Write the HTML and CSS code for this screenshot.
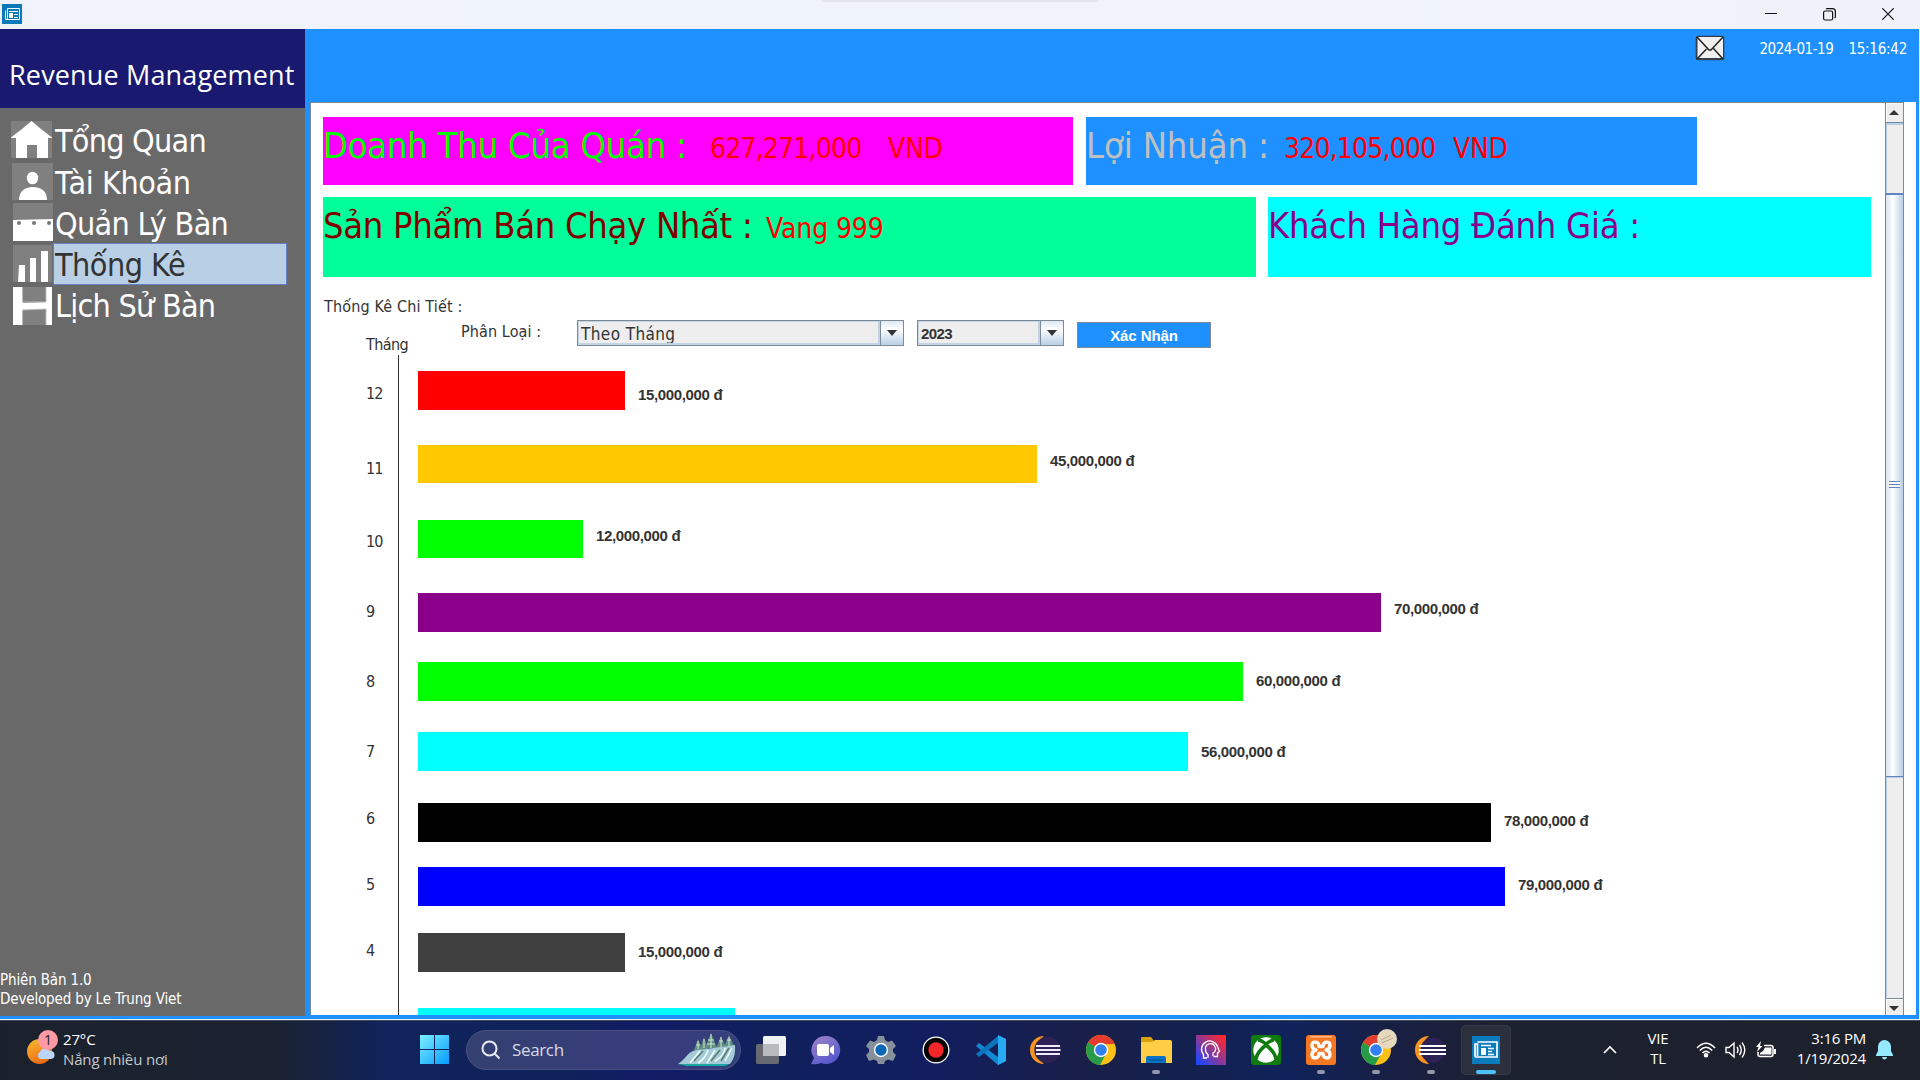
FILE: index.html
```
<!DOCTYPE html>
<html lang="vi">
<head>
<meta charset="utf-8">
<title>Revenue Management</title>
<link rel="stylesheet" href="styles.css">
</head>
<body>
<div class="titlebar">
  <svg class="app-icon" width="20" height="20" viewBox="0 0 20 20"><rect width="20" height="20" fill="#0b78b8"/><g fill="none" stroke="#fff"><path d="M5.5 4.500H17.500V15.500H3.500V6.500"/><path d="M5.500 4.500V15" /><path d="M7 7.500H16M12 10.500H16M12 13.500H16"/></g><path d="M7 9h4v5H7z" fill="#fff"/></svg>
  <div class="window-buttons">
    <svg width="12" height="12" viewBox="0 0 12 12"><path d="M0 5.500H12" stroke="#111"/></svg>
    <svg width="13" height="13" viewBox="0 0 13 13" fill="none" stroke="#111" stroke-width="1.200"><rect x=".6" y="3" width="9" height="9" rx="1.500"/><path d="M3 1Q3.500.6 4.500.6H9.500Q12.400.6 12.400 3.500V8.500Q12.400 9.500 11.600 10"/></svg>
    <svg width="12" height="12" viewBox="0 0 12 12"><path d="M.3.3 11.700 11.700M11.700.3.3 11.700" stroke="#111" stroke-width="1.200"/></svg>
  </div>
</div>

<div class="app">
  <aside class="sidebar">
    <h1 class="brand">Revenue Management</h1>
    <nav class="menu">
      <a class="menu-item home"><svg width="41" height="37" viewBox="0 0 41 37"><rect width="41" height="37" fill="#808080"/><path d="M20.500 0 30 8l11 8.500V17h-4v20H26V24H16v13H5V17H0v-.5L11 8z" fill="#fff"/></svg><span>Tổng Quan</span></a>
      <a class="menu-item account"><svg width="41" height="37" viewBox="0 0 41 37"><rect width="41" height="37" fill="#808080"/><ellipse cx="20.500" cy="15" rx="5.700" ry="6.300" fill="#fff"/><path d="M7 37C7 29 12 24 21 24S35 29 35 37z" fill="#fff"/></svg><span>Tài Khoản</span></a>
      <a class="menu-item table"><svg width="40" height="38" viewBox="0 0 40 38"><rect width="40" height="38" fill="#808080"/><path d="M0 17 40 16V38H0z" fill="#fff"/><g fill="#777"><circle cx="6" cy="20" r="2"/><circle cx="21" cy="20" r="2"/><circle cx="36" cy="20" r="2"/></g></svg><span>Quản Lý Bàn</span></a>
      <a class="menu-item stats selected"><svg width="39" height="37" viewBox="0 0 39 37"><rect width="39" height="37" fill="#808080"/><path d="M6 20h6v17H5zM17 13h6v24h-6zM28 6h7v31h-7z" fill="#fff"/></svg><span>Thống Kê</span></a>
      <a class="menu-item history"><svg width="39" height="38" viewBox="0 0 39 38"><rect width="39" height="38" fill="#fff"/><path d="M10 0H33V15L10 16zM10 23 33 22V38H10z" fill="#808080"/><path d="M9.500 0V15H33V0M9.500 38V23L33 22V38" fill="none" stroke="#bbb"/></svg><span>Lịch Sử Bàn</span></a>
    </nav>
    <footer class="about">Phiên Bản 1.0<br>Developed by Le Trung Viet</footer>
  </aside>

  <main class="main">
    <header class="topbar">
      <svg width="30" height="26" viewBox="0 0 30 26"><rect x=".7" y=".7" width="28.600" height="24.600" rx="2.500" fill="#333f4d"/><path d="M2.500 2H28V23H2.500z" fill="#f0f0f0"/><path d="M2 2 14 15h2L28 2M2 24 11.500 14M28 24 18.500 13.500" fill="none" stroke="#222" stroke-width="1.500"/></svg>
      <span class="date">2024-01-19</span>
      <span class="time">15:16:42</span>
    </header>
    <div class="viewport">
      <section class="content">
        <div class="cards first">
          <div class="card revenue"><span class="label">Doanh Thu Của Quán :</span><span class="number">627,271,000</span><span class="unit">VND</span></div>
          <div class="card profit"><span class="label">Lợi Nhuận :</span><span class="number">320,105,000</span><span class="unit">VND</span></div>
        </div>
        <div class="cards second">
          <div class="card best"><span class="label">Sản Phẩm Bán Chạy Nhất :</span><span class="name">Vang 999</span></div>
          <div class="card rating"><span class="label">Khách Hàng Đánh Giá :</span></div>
        </div>
        <h2 class="caption">Thống Kê Chi Tiết :</h2>
        <div class="filters">
          <span class="axis-title">Tháng</span>
          <span class="filter-label">Phân Loại :</span>
          <div class="combo kind"><span>Theo Tháng</span><i></i></div>
          <div class="combo year"><span>2023</span><i></i></div>
          <button class="confirm">Xác Nhận</button>
        </div>
        <div class="chart">
          <div class="row m12"><span class="month">12</span><div class="bar" style="width:207px"></div><span class="value">15,000,000 đ</span></div>
          <div class="row m11"><span class="month">11</span><div class="bar" style="width:619px"></div><span class="value">45,000,000 đ</span></div>
          <div class="row m10"><span class="month">10</span><div class="bar" style="width:165px"></div><span class="value">12,000,000 đ</span></div>
          <div class="row m9"><span class="month">9</span><div class="bar" style="width:963px"></div><span class="value">70,000,000 đ</span></div>
          <div class="row m8"><span class="month">8</span><div class="bar" style="width:825px"></div><span class="value">60,000,000 đ</span></div>
          <div class="row m7"><span class="month">7</span><div class="bar" style="width:770px"></div><span class="value">56,000,000 đ</span></div>
          <div class="row m6"><span class="month">6</span><div class="bar" style="width:1073px"></div><span class="value">78,000,000 đ</span></div>
          <div class="row m5"><span class="month">5</span><div class="bar" style="width:1087px"></div><span class="value">79,000,000 đ</span></div>
          <div class="row m4"><span class="month">4</span><div class="bar" style="width:207px"></div><span class="value">15,000,000 đ</span></div>
          <div class="row m3"><span class="month"></span><div class="bar" style="width:317px"></div></div>
        </div>
      </section>
      <div class="scrollbar">
        <div class="arrow up"></div>
        <div class="track"></div>
        <div class="thumb"><i></i></div>
        <div class="track rest"></div>
        <div class="arrow down"></div>
      </div>
      <div class="edge"></div>
    </div>
  </main>
</div>

<div class="taskbar">
  <div class="weather">
    <svg width="36" height="36" viewBox="0 0 36 36"><defs><linearGradient id="sun" x1="0" y1="0" x2=".5" y2="1"><stop stop-color="#f6bd31"/><stop offset="1" stop-color="#ee6c13"/></linearGradient></defs><circle cx="13.500" cy="21.500" r="12.500" fill="url(#sun)"/><path d="M14 29a4 4 0 0 1 0-7 5.500 5.500 0 0 1 10-1 4 4 0 0 1 1 8z" fill="#bcd5f7"/><circle cx="22" cy="10" r="10" fill="#ff99a4"/><text x="22" y="15" text-anchor="middle" class="badge-text">1</text></svg>
    <div class="weather-text"><span>27°C</span><span class="muted">Nắng nhiều nơi</span></div>
  </div>
  <svg class="start" width="29" height="29" viewBox="0 0 29 29"><defs><linearGradient id="win" x1="0" y1="0" x2="1" y2="1"><stop stop-color="#7cf0ff"/><stop offset="1" stop-color="#069bff"/></linearGradient></defs><path d="M0 0H14V14H0zM15 0H29V14H15zM0 15H14V29H0zM15 15H29V29H15z" fill="url(#win)"/></svg>
  <div class="search">
    <svg width="20" height="20" viewBox="0 0 20 20" fill="none" stroke="#e8eaf2" stroke-width="2"><circle cx="8.500" cy="8.500" r="7"/><path d="M13.500 13.500 18.500 18.500"/></svg>
    <span>Search</span>
    <svg class="scene" width="58" height="34" viewBox="0 0 58 34"><path d="M20 6l5 11H16zM26 4l4 12H22zM33 0l6 15H27zM43 3l5 12H38zM51 2l5 11H46z" fill="#5f8d80"/><path d="M33 1V15M43 4V14M51 4V13M20 8V16M26 6V15M30 7H36M29 11H37M41 8H45M49 7H53M18 12H22" stroke="#cfe6d6"/><path d="M0 31C8 26 9 19 18 17L36 15 57 12Q58 24 52 31z" fill="#a6cbd8"/><path d="M0 31H51Q49 33 46 33H9z" fill="#19a7a5"/><path d="M12 30 22 18M20 30Q28 25 30 17M29 30 37 17M37 28Q46 23 47 15M47 28 54 15" stroke="#efffff" stroke-width="1.500" fill="none"/><path d="M16 28 25 18M33 28 42 17M43 28 51 15" stroke="#577c6d" stroke-width="1.500" fill="none"/></svg>
  </div>
  <div class="tasks">
    <div class="task"><svg viewBox="0 0 30 30"><rect y="8" width="23" height="20" rx="1.500" fill="#666a70"/><rect x="7" width="23" height="20" rx="1.500" fill="#f0f1f3"/><path d="M7 8H23V20H7z" fill="#b8babd"/></svg></div>
    <div class="task"><svg viewBox="0 0 30 30"><defs><linearGradient id="chat" x1="0" y1="0" x2=".6" y2="1"><stop stop-color="#a285c5"/><stop offset="1" stop-color="#5557cf"/></linearGradient></defs><path d="M15 0a14 14 0 1 1-5 27Q5 29 0 28L3 22A14 14 0 0 1 15 0z" fill="url(#chat)"/><rect x="6" y="8" width="12" height="12" rx="2" fill="#fff"/><path d="M19 12 23 9V19L19 16z" fill="#fff"/></svg></div>
    <div class="task"><svg viewBox="0 0 30 30"><path d="M11 4 12 0H18L19 4 22 6 26 4.500 30 10 27 13V16L30 19 27 25 22 23.500 19 25 18 28H12L11 25 8 23.500 3 25 0 19 3 16V13L0 10 4 4.500 8 6z" fill="#85909a"/><circle cx="15" cy="14" r="7.200" fill="#fff"/><circle cx="15" cy="14" r="5.700" fill="#0868b7"/></svg></div>
    <div class="task"><svg viewBox="0 0 30 30"><circle cx="15" cy="14" r="13.500" fill="#fff"/><circle cx="15" cy="14" r="12.200" fill="#000"/><circle cx="15" cy="14" r="7.700" fill="#f3272a"/></svg></div>
    <div class="task"><svg viewBox="0 0 30 30"><path d="M22 0 30 3V25L22 29 0 10 3 7 22 21z" fill="#1186d1"/><path d="M0 18 3 21 22 7V0z" fill="#0c74bd"/><path d="M22-1 30 3V25L22 29z" fill="#29a9f2"/></svg></div>
    <div class="task"><svg viewBox="0 0 30 30"><path d="M13 0A14 14 0 0 0 13 28 18 18 0 0 1 13 0z" fill="#f7941e"/><circle cx="16.500" cy="14" r="13.200" fill="#2c2255"/><path d="M5 10H29M5 14H29.500M5 18H29" stroke="#efecf7" stroke-width="2"/></svg></div>
    <div class="task"><svg viewBox="0 0 30 30"><circle cx="15" cy="14" r="15" fill="#fbc116"/><path d="M15 14 2 6.500A15 15 0 0 1 28 6.500L28.500 8H15z" fill="#e33b2e"/><path d="M15 14 2 6.500A15 15 0 0 0 14 29L20 18z" fill="#269b48"/><circle cx="15" cy="14" r="7.200" fill="#fff"/><circle cx="15" cy="14" r="5.800" fill="#327ff1"/></svg></div>
    <div class="task running"><svg viewBox="0 0 30 30"><path d="M0 2Q0 1 1 1H10L13 5H30V12H0z" fill="#dca00e"/><path d="M0 6H11L14 4H29Q31 4 31 6V27H0z" fill="#ffce45"/><path d="M5 27V22Q5 20 7 20H23Q25 20 25 22V27z" fill="#0873c5"/><path d="M8 24H22" stroke="#044f90"/></svg></div>
    <div class="task"><svg viewBox="0 0 30 30"><defs><linearGradient id="head" x1="0" y1="1" x2="1" y2="0"><stop offset=".1" stop-color="#2447f5"/><stop offset=".9" stop-color="#fb2831"/></linearGradient></defs><path d="M0-1H30V29H0z" fill="url(#head)"/><path d="M11 22H7.500V18.500A8.200 8.200 0 1 1 21.500 10.500L23.500 15.500 21.500 17V20.500H17.500M12 22V18.500Q9.500 17 9.500 13.500A5 5 0 1 1 17 17V20" fill="none" stroke="#fff" stroke-width="1.300"/></svg></div>
    <div class="task"><svg viewBox="0 0 30 30"><rect y="-1" width="30" height="30" rx="3" fill="#107c10"/><circle cx="15" cy="14" r="12.700" fill="#fff"/><path d="M7 4Q10 4 15 8 20 4 23 4M15 9Q24 16 25 23M15 9Q6 16 5 23" stroke="#107c10" stroke-width="3.500" fill="none"/></svg></div>
    <div class="task running"><svg viewBox="0 0 30 30"><rect y="-1" width="30" height="30" rx="3" fill="#f47824"/><path d="M4 .8H26" stroke="#fbb98a" stroke-width="1.500"/><path d="M11 6.500Q6 5 6 9.500 6 13 10 14 6 15 6 18.500 6 23 11 21.500 13 20.500 13 17.500H17Q17 20.500 19 21.500 24 23 24 18.500 24 15 20 14 24 13 24 9.500 24 5 19 6.500 17 7.500 17 10.500H13Q13 7.500 11 6.500z" fill="none" stroke="#fff" stroke-width="3.400" stroke-linejoin="round"/></svg></div>
    <div class="task running"><svg viewBox="0 0 30 30"><circle cx="15" cy="14" r="15" fill="#fbc116"/><path d="M15 14 2 6.500A15 15 0 0 1 28 6.500L28.500 8H15z" fill="#e33b2e"/><path d="M15 14 2 6.500A15 15 0 0 0 14 29L20 18z" fill="#269b48"/><circle cx="15" cy="14" r="7.200" fill="#fff"/><circle cx="15" cy="14" r="5.800" fill="#327ff1"/><circle cx="26" cy="3" r="10" fill="#e6d8bc"/><path d="M20 4 30-1M21 7 32 2" stroke="#b6a78d"/></svg></div>
    <div class="task running"><svg viewBox="0 0 30 30"><path d="M13 0A14 14 0 0 0 13 28 18 18 0 0 1 13 0z" fill="#f7941e"/><circle cx="17" cy="14" r="12.600" fill="#2c2255"/><path d="M3 10H30M3 14H30M3 18H30" stroke="#fff" stroke-width="2"/></svg></div>
    <div class="task active"><svg viewBox="0 0 30 30"><path d="M1 0H29V28H1z" fill="#0a7bbd"/><path d="M6.500 6H26V21H5Q4 21 4 19V8H6.500V20" fill="none" stroke="#fff" stroke-width="1.700"/><path d="M10 12h5v7h-5z" fill="#fff"/><path d="M10 9.500H20M17 12.500H23M17 15.500H21M17 18.500H23" stroke="#fff" stroke-width="1.500"/></svg></div>
  </div>
  <div class="tray">
    <svg width="14" height="9" viewBox="0 0 14 9"><path d="M1 8 7 2 13 8" fill="none" stroke="#fff" stroke-width="1.700"/></svg>
    <div class="stack lang"><span>VIE</span><span>TL</span></div>
    <svg class="wifi" width="20" height="16" viewBox="0 0 20 16" fill="none" stroke="#fff" stroke-width="1.500"><path d="M1 6Q10-3.500 19 6M3.800 8.500Q10 2 16.200 8.500M6.500 11Q10 7.500 13.500 11"/><circle cx="10" cy="13.300" r="1.500" fill="#fff"/></svg>
    <svg class="speaker" width="21" height="18" viewBox="0 0 21 18" fill="none" stroke="#fff" stroke-width="1.400"><path d="M1 6.500H4L9 2V16L4 11.500H1z"/><path d="M12 6Q14 9 12 12M14.500 4Q18 9 14.500 14M17 1.500Q22.500 9 17 16.500"/></svg>
    <svg class="battery" width="20" height="17" viewBox="0 0 20 17"><path d="M8 4.500H15Q17 4.500 17 6.500V13Q17 15.500 15 15.500H4Q2 15.500 2 13V11" fill="none" stroke="#fff" stroke-width="1.500"/><path d="M9 6.500H15.500V13.500H4V12L7 10zM18 8h2v5h-2z" fill="#fff"/><path d="M5 0 0 6H2.500L1 11 6.500 5H4z" fill="#fff"/></svg>
    <div class="stack clock"><span>3:16 PM</span><span>1/19/2024</span></div>
    <svg class="bell" width="17" height="20" viewBox="0 0 17 20"><path d="M8.500 0A6.500 6.500 0 0 0 2 6.500V11L0 15V16H17V15L15 11V6.500A6.500 6.500 0 0 0 8.500 0zM6 17H11Q10.500 19.500 8.500 19.500T6 17z" fill="#97e9ff"/></svg>
  </div>
</div>
</body>
</html>
```
FILE: styles.css
```
* { box-sizing: border-box; }
body {
  margin: 0;
  width: 1920px;
  height: 1080px;
  overflow: hidden;
  display: flex;
  flex-direction: column;
  background: #fff;
  font-family: "DejaVu Sans Condensed", "DejaVu Sans", sans-serif;
  color: #333;
}
svg { display: block; flex: none; }
span { white-space: nowrap; }

/* window title bar */
.titlebar {
  height: 29px;
  display: flex;
  justify-content: space-between;
  align-items: center;
  padding: 0 26px 1px 2px;
  background: linear-gradient(90deg, transparent 820px, #e2e5ec 824px, #e2e5ec 1096px, transparent 1100px) 0 0 / 100% 2px no-repeat, linear-gradient(90deg, #f0f3fb, #eff3f9);
}
.window-buttons { display: flex; align-items: center; gap: 46px; }

.app { height: 991px; display: flex; border-bottom: 1px solid #e8f0fa; }

/* sidebar */
.sidebar { width: 305px; background: #696969; display: flex; flex-direction: column; border-bottom: 3px solid #1e90ff; }
.brand {
  margin: 0;
  height: 79px;
  padding-left: 9px;
  background: #191970;
  color: #fff;
  font: 400 27px/92px "Open Sans", sans-serif;
  letter-spacing: .15px;
  white-space: nowrap;
}
.menu { padding: 12px 18px 0 11px; display: grid; grid-template-rows: 42px 41px 40px 42px 41px; }
.menu-item { display: flex; align-items: flex-start; color: #fff; font-size: 32px; letter-spacing: -.75px; }
.menu-item svg { margin-top: 1px; }
.menu-item span { flex: 1; margin-left: 3px; line-height: 42px; }
.account svg { margin: 1px 0 0 1px; }
.account span { margin-left: 2px; letter-spacing: -.4px; }
.table svg { margin: 0 0 0 2px; }
.table span { margin-left: 2px; line-height: 43px; letter-spacing: -.7px; }
.stats svg, .history svg { margin: 2px 1px 0 2px; }
.stats span { margin-left: 0; }
.history span { margin-left: 2px; letter-spacing: -.75px; line-height: 43px; }
.menu-item.selected span {
  height: 42px;
  padding-left: 1px;
  border: 1px solid #6382bf;
  background: #b8cfe5;
  color: #333;
  line-height: 42px;
  letter-spacing: -.5px;
}
.about { margin-top: auto; padding-bottom: 7px; color: #fff; font-size: 15px; line-height: 19px; letter-spacing: -.15px; }

/* main area */
.main { flex: 1; margin-right: 1px; background: #1e90ff; }
.topbar {
  height: 73px;
  padding: 6px 12px 0 0;
  display: flex;
  justify-content: flex-end;
  color: #fff;
  font-size: 15px;
  line-height: 28px;
}
.date { margin-left: 34px; letter-spacing: -.45px; }
.time { margin-left: 15px; letter-spacing: -.25px; }
.viewport { height: 913px; margin: 0 3px 0 5px; display: flex; }
.content { flex: 1; overflow: hidden; padding: 14px 0 0 12px; background: #fff; border: 1px solid #7a8a99; border-width: 1px 0 0 1px; }
.edge { width: 12px; background: #fff; }

.cards { display: flex; gap: 12px; margin-bottom: 12px; }
.first { gap: 13px; }
.card { display: flex; align-items: baseline; height: 68px; line-height: 58px; font-size: 28px; color: #f00; }
.second .card { height: 80px; }
.label { font-size: 36px; letter-spacing: -.2px; }
.number { letter-spacing: -.8px; }
.unit { letter-spacing: -.3px; }
.revenue { width: 750px; background: #f0f; }
.revenue .label { width: 366px; color: #0f0; }
.revenue .number { width: 150px; margin-left: 21px; }
.revenue .unit { margin-left: 28px; }
.profit { width: 611px; background: #1e90ff; }
.profit .label { width: 186px; color: #c0c0c0; letter-spacing: -.1px; }
.profit .number { width: 150px; margin-left: 12px; }
.profit .unit { margin-left: 19px; }
.best { width: 933px; background: #00fe9b; }
.best .label { width: 433px; color: #800000; letter-spacing: -.3px; }
.best .name { margin-left: 10px; letter-spacing: -.1px; }
.rating { width: 603px; background: #0ff; }
.rating .label { color: #8b008b; letter-spacing: -.25px; }

.caption { margin: 18px 0 1px 1px; font-size: 16px; font-weight: 400; line-height: 24px; letter-spacing: .15px; }
.filters { display: flex; align-items: flex-start; height: 35px; padding-left: 43px; font-size: 16px; }
.axis-title { width: 95px; margin-top: 14px; line-height: 21px; letter-spacing: -.6px; }
.filter-label { width: 116px; line-height: 23px; letter-spacing: .1px; }
.combo { display: flex; height: 26px; border: 1px solid #7a8a99; background: #eee; }
.combo span { flex: 1; overflow: hidden; height: 24px; border: 2px solid #c3d3e4; border-width: 1px 2px 2px 1px; padding-left: 2px; line-height: 24px; }
.combo i { width: 23px; border-left: 1px solid #7a8a99; background: linear-gradient(#dfe8f2, #fff 35%, #b8cfe5); display: flex; justify-content: center; align-items: center; }
.combo i::before { content: ""; border: solid transparent; border-width: 6px 5.5px 0; border-top-color: #333; }
.kind { width: 327px; font-size: 17px; letter-spacing: .4px; }
.kind span { line-height: 25px; }
.year { width: 147px; margin-left: 13px; font: bold 15px "Liberation Sans", Arial, sans-serif; letter-spacing: -.6px; }
.confirm { margin: 2px 0 0 13px; padding: 0; width: 134px; height: 26px; border: 1px solid #7a8a99; background: #1e90ff; color: #fff; font: bold 15px "Liberation Sans", Arial, sans-serif; letter-spacing: -.1px; }

/* horizontal bar chart */
.chart { margin-left: 75px; height: 680px; border-left: 1px solid #333; }
.row { display: flex; align-items: flex-start; height: 70px; margin-left: -33px; }
.month { width: 52px; font-size: 16px; line-height: 21px; letter-spacing: -1px; }
.bar { height: 39px; margin-top: 16px; }
.value { margin-left: 13px; font: bold 15px/20px "Liberation Sans", Arial, sans-serif; letter-spacing: -.35px; }
.m12 { height: 74px; } .m12 .month { margin-top: 28px; } .m12 .bar { background: #f00; } .m12 .value { margin-top: 30px; }
.m11 { height: 75px; } .m11 .month { margin-top: 29px; } .m11 .bar { height: 38px; background: #ffc800; } .m11 .value { margin-top: 22px; }
.m10 { height: 73px; } .m10 .month { margin-top: 27px; } .m10 .bar { height: 38px; background: #0f0; } .m10 .value { margin-top: 22px; }
.m9 { height: 69px; } .m9 .month { margin-top: 24px; } .m9 .bar { background: #8b008b; } .m9 .value { margin-top: 22px; }
.m8 { height: 70px; } .m8 .month { margin-top: 25px; } .m8 .bar { background: #0f0; } .m8 .value { margin-top: 25px; }
.m7 { height: 71px; } .m7 .month { margin-top: 25px; } .m7 .bar { background: #0ff; } .m7 .value { margin-top: 26px; }
.m6 { height: 64px; } .m6 .month { margin-top: 21px; } .m6 .bar { background: #000; } .m6 .value { margin-top: 24px; }
.m5 { height: 66px; } .m5 .month { margin-top: 23px; } .m5 .bar { background: #00f; } .m5 .value { margin-top: 24px; }
.m4 { height: 75px; } .m4 .month { margin-top: 23px; } .m4 .bar { background: #404040; } .m4 .value { margin-top: 25px; }
.m3 .bar { background: #0ff; }

/* scroll bar */
.scrollbar { width: 19px; display: flex; flex-direction: column; background: #eee; border: 1px solid #7a8a99; border-bottom: 0; }
.arrow { height: 20px; display: flex; justify-content: center; align-items: center; border: 1px solid #fff; border-width: 1px 0 0 1px; }
.arrow::before { content: ""; margin-left: -2px; border: solid transparent; border-width: 0 5px 5px; border-bottom-color: #333; }
.up::before { margin-top: -2px; }
.down { height: 16px; margin-top: auto; }
.down::before { margin-top: 1px; border-width: 5px 5px 0; border-top-color: #333; }
.track { height: 70px; border: solid #b8cfe5; border-width: 2px 0 0 1px; box-shadow: 0 -1px #7a8a99; }
.thumb { height: 584px; margin-left: -1px; border: 1px solid #6382bf; border-width: 2px 0 1px 1px; background: linear-gradient(90deg, #d8e4f0, #fff 40%, #b8cfe5); display: flex; justify-content: center; align-items: center; }
.thumb i { width: 11px; height: 7px; margin-top: -2px; background: repeating-linear-gradient(#6382bf 0 1px, #fff 1px 3px); }
.rest { flex: 1; border-width: 1px 0 1px 1px; border-bottom-color: #7a8a99; box-shadow: none; }

/* desktop task bar */
.taskbar {
  height: 60px;
  display: flex;
  align-items: center;
  padding-bottom: 2px;
  border-top: 1px solid #454b59;
  background: linear-gradient(90deg, #1b212c 0, #1b2333 280px, #10235a 380px, #10225a 560px, #121b66 650px, #10205c 760px, #121e60 930px, #191f48 1080px, #14214f 1190px, #10235a 1290px, #191f42 1400px, #1c212e 1510px, #1c212c 1920px);
  color: #fff;
  font: 15px "Open Sans", sans-serif;
}
.weather { width: 393px; margin-left: 26px; margin-right: 1px; display: flex; align-items: flex-start; }
.weather svg { margin: -1px 1px 0 0; }
.weather-text { display: flex; flex-direction: column; margin-top: -2px; line-height: 20px; letter-spacing: -.15px; }
.muted { color: #c5c8cc; }
.badge-text { font: 14px "Open Sans", sans-serif; fill: #222; }
.search {
  width: 275px;
  height: 40px;
  margin-left: 17px;
  padding: 0 4px 0 14px;
  display: flex;
  align-items: center;
  border: 1px solid #4a5283;
  border-radius: 20px;
  background: linear-gradient(90deg, #334070, #393c7e 75%, #34417a);
  color: #d5d9e5;
  font-size: 17px;
}
.search span { margin-left: 11px; letter-spacing: -.35px; }
.scene { margin-left: auto; }
.tasks { display: flex; margin-left: 3px; }
.task { width: 55px; height: 50px; padding: 11px 0 0 12px; position: relative; }
.task svg { width: 30px; height: 30px; overflow: visible; }
.running::after, .active::after { content: ""; position: absolute; left: 23px; bottom: 1px; width: 8px; height: 4px; border-radius: 2px; background: #9298aa; }
.active { width: 50px; margin-left: 2px; padding-left: 10px; border-radius: 5px; background: #2b303c; box-shadow: inset 0 0 0 1px #353a46; }
.active::after { left: 15px; width: 20px; background: #4cc2ff; }
.tray { margin-left: auto; padding-right: 27px; display: flex; align-items: center; }
.stack { display: flex; flex-direction: column; margin-top: -3px; line-height: 20px; letter-spacing: -.2px; }
.lang { width: 30px; margin-left: 26px; align-items: center; }
.wifi { margin-left: 23px; }
.speaker { margin-left: 9px; }
.battery { margin-left: 10px; }
.clock { width: 81px; margin-left: 9px; align-items: flex-end; }
.bell { margin-left: 10px; }
```
